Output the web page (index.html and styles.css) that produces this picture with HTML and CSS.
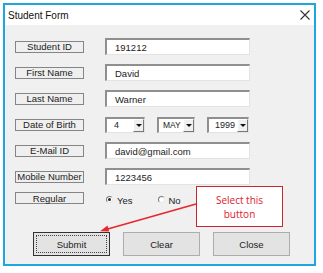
FILE: index.html
```html
<!DOCTYPE html>
<html>
<head>
<meta charset="utf-8">
<link rel="stylesheet" href="styles.css">
</head>
<body>
<div class="window">
  <div class="titlebar">
    <span class="title">Student Form</span>
    <svg class="close" width="10" height="10" viewBox="0 0 10 10"><path d="M0.5 0.5 L9.5 9.5 M9.5 0.5 L0.5 9.5" stroke="#333" stroke-width="1.1" fill="none"/></svg>
  </div>
  <div class="body">
    <div class="rows">
      <div class="row"><div class="label">Student ID</div><div class="input">191212</div></div>
      <div class="row"><div class="label">First Name</div><div class="input">David</div></div>
      <div class="row"><div class="label">Last Name</div><div class="input">Warner</div></div>
      <div class="row">
        <div class="label">Date of Birth</div>
        <div class="combos">
          <div class="combo day"><span class="val">4</span><span class="drop"><i></i></span></div>
          <div class="combo month"><span class="val">MAY</span><span class="drop"><i></i></span></div>
          <div class="combo year"><span class="val">1999</span><span class="drop"><i></i></span></div>
        </div>
      </div>
      <div class="row"><div class="label">E-Mail ID</div><div class="input">david@gmail.com</div></div>
      <div class="row"><div class="label">Mobile Number</div><div class="input">1223456</div></div>
      <div class="row row-radio">
        <div class="label">Regular</div>
        <div class="radios">
          <span class="radio checked"><span class="dot"></span></span><span class="rtext">Yes</span>
          <span class="radio no"></span><span class="rtext">No</span>
        </div>
      </div>
    </div>
    <div class="buttons">
      <div class="btn focused"><span class="focus">Submit</span></div>
      <div class="btn">Clear</div>
      <div class="btn">Close</div>
    </div>
  </div>
  <svg class="arrow" width="313" height="263" viewBox="0 0 313 263">
    <line x1="193" y1="201" x2="103" y2="226.5" stroke="#e8262e" stroke-width="1.6"/>
    <path d="M97 228.2 L104.5 222.6 L106.2 228.6 Z" fill="#e8262e"/>
  </svg>
  <div class="callout">Select this<br>button</div>
</div>
</body>
</html>
```

FILE: styles.css
```css
html, body {
  margin: 0;
  padding: 0;
  background: #ffffff;
}
body {
  width: 323px;
  height: 273px;
  font-family: "Liberation Sans", Arial, sans-serif;
  font-size: 9.5px;
  color: #111;
  padding-top: 3px;
  padding-left: 3px;
  box-sizing: border-box;
}
.window {
  position: relative;
  width: 313px;
  height: 263px;
  border: 2px solid #1ea7de;
  box-sizing: border-box;
  background: #f0f0f0;
  display: flex;
  flex-direction: column;
}
.titlebar {
  height: 20px;
  background: #ffffff;
  display: flex;
  align-items: center;
  justify-content: space-between;
  padding: 0 4px 0 3px;
  flex: none;
}
.title {
  font-size: 10px;
  color: #111;
  margin-top: 1px;
}
.body {
  padding: 13px 0 0 10px;
  flex: 1;
}
.rows {
  display: flex;
  flex-direction: column;
  gap: 9px;
}
.row {
  height: 17px;
  display: flex;
  align-items: center;
}
.row-radio {
  height: 12px;
  margin-top: -2px;
}
.label {
  width: 69px;
  height: 12px;
  box-sizing: border-box;
  border: 1px solid #858585;
  background: #efefef;
  display: flex;
  align-items: center;
  justify-content: center;
  font-size: 9.5px;
  color: #222;
  flex: none;
}
.input {
  margin-left: 21px;
  width: 145px;
  height: 17px;
  box-sizing: border-box;
  background: #fff;
  border-top: 2px solid #8f8f8f;
  border-left: 2px solid #8f8f8f;
  border-right: 1px solid #e3e3e3;
  border-bottom: 1px solid #e3e3e3;
  padding-left: 8px;
  display: flex;
  align-items: center;
  font-size: 9.5px;
  color: #222;
}
.combos {
  margin-left: 21px;
  display: flex;
  gap: 12px;
}
.combo {
  height: 16px;
  box-sizing: border-box;
  background: #fff;
  border-top: 2px solid #8f8f8f;
  border-left: 2px solid #8f8f8f;
  border-right: 1px solid #e3e3e3;
  border-bottom: 1px solid #e3e3e3;
  display: flex;
  align-items: stretch;
  justify-content: space-between;
}
.combo.day { width: 40px; }
.combo.month { width: 38px; }
.combo.year { width: 42px; }
.val {
  display: flex;
  align-items: center;
  padding-left: 7px;
  font-size: 9px;
  color: #222;
}
.combo.month .val { padding-left: 4px; font-size: 8.5px; }
.combo.year .val { padding-left: 6px; }
.drop {
  width: 11px;
  background: #f0f0f0;
  border-left: 1px solid #fff;
  border-top: 1px solid #fff;
  border-right: 1px solid #777;
  border-bottom: 1px solid #777;
  box-sizing: border-box;
  display: flex;
  align-items: center;
  justify-content: center;
}
.drop i {
  width: 0;
  height: 0;
  border-left: 3px solid transparent;
  border-right: 3px solid transparent;
  border-top: 3px solid #111;
  margin-top: 1px;
}
.radios {
  margin-left: 22px;
  display: flex;
  align-items: center;
  height: 12px;
}
.radio {
  width: 7px;
  height: 7px;
  border-radius: 50%;
  box-sizing: border-box;
  border: 1px solid;
  border-color: #7a7a7a #e8e8e8 #e8e8e8 #7a7a7a;
  background: #fff;
  display: flex;
  align-items: center;
  justify-content: center;
  margin-top: 3px;
}
.radio .dot {
  width: 3px;
  height: 3px;
  border-radius: 50%;
  background: #222;
}
.radio.no { margin-left: 25px; }
.rtext {
  margin-left: 4px;
  margin-top: 4px;
  font-size: 9.5px;
  color: #222;
}
.buttons {
  margin-top: 28px;
  margin-left: 18px;
  display: flex;
  gap: 13px;
}
.btn {
  width: 77px;
  height: 24px;
  box-sizing: border-box;
  background: #e3e3e3;
  border: 1px solid #adadad;
  display: flex;
  align-items: center;
  justify-content: center;
  font-size: 9.5px;
  color: #222;
}
.btn.focused {
  border: 1px solid #333;
  padding: 2px;
}
.focus {
  width: 100%;
  height: 100%;
  box-sizing: border-box;
  border: 1px dotted #444;
  display: flex;
  align-items: center;
  justify-content: center;
}
.arrow {
  position: absolute;
  left: -2px;
  top: -2px;
}
.callout {
  position: absolute;
  left: 191px;
  top: 181px;
  width: 87px;
  height: 41px;
  box-sizing: border-box;
  border: 1px solid #c8262c;
  background: #ffffff;
  color: #e0202a;
  font-family: "Open Sans", "Liberation Sans", sans-serif;
  font-size: 10px;
  line-height: 14px;
  text-align: center;
  display: flex;
  align-items: center;
  justify-content: center;
}
```
